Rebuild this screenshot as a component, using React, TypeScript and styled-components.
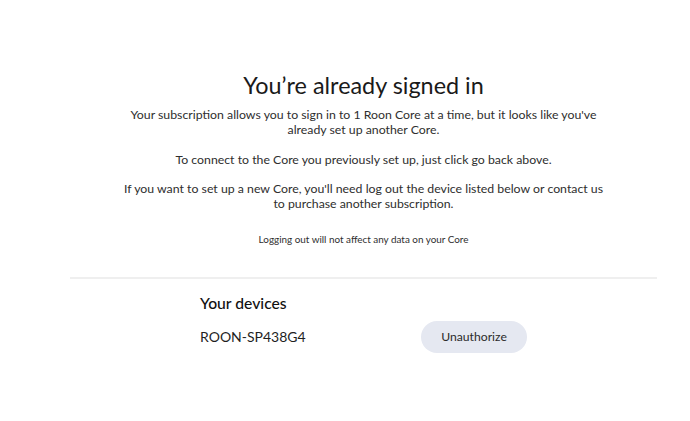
import * as React from 'react'
import styled, { createGlobalStyle } from 'styled-components'

const GlobalStyle = createGlobalStyle`
	html, body {
		margin: 0;
		padding: 0;
		background: #ffffff;
	}
	body {
		font-family: Lato, 'Noto Sans', sans-serif;
		color: #1f1f1f;
	}
`

const Page = styled.main`
	margin: 0 33px 0 70px;
	padding-top: 71px;
	display: flex;
	flex-direction: column;
	align-items: center;
`

const Title = styled.h1`
	margin: 0 0 8px;
	font-size: 23.4px;
	font-weight: 400;
	line-height: 28px;
	color: #1a1a1a;
`

const Text = styled.p<{ $small?: boolean }>`
	margin: ${(p) => (p.$small ? '6px 0 0' : '0 0 14.5px')};
	max-width: 486px;
	text-align: center;
	font-size: ${(p) => (p.$small ? '9.9px' : '12.3px')};
	line-height: 15px;
	color: #2e2e2e;
`

const Divider = styled.hr`
	align-self: stretch;
	margin: 30px 0 0;
	border: none;
	border-top: 2px solid #efefef;
`

const Devices = styled.section`
	width: 327px;
	padding-top: 14px;
`

const DevicesTitle = styled.h2`
	margin: 0 0 8px;
	font-size: 15.7px;
	font-weight: 500;
	line-height: 20px;
	color: #111111;
`

const DeviceRow = styled.div`
	display: flex;
	align-items: center;
	justify-content: space-between;
`

const DeviceName = styled.span`
	font-size: 14px;
	color: #1f1f1f;
`

const Button = styled.button`
	width: 106px;
	height: 32px;
	border: none;
	border-radius: 16px;
	background: #e5e8f1;
	font-family: Lato, 'Noto Sans', sans-serif;
	font-size: 12.2px;
	color: #2b2b2b;
	cursor: pointer;
`

export default function App() {
	return (
		<>
			<GlobalStyle />
			<Page>
				<Title>You’re already signed in</Title>
				<Text>
					Your subscription allows you to sign in to 1 Roon Core at a time, but
					it looks like you've already set up another Core.
				</Text>
				<Text>
					To connect to the Core you previously set up, just click go back
					above.
				</Text>
				<Text>
					If you want to set up a new Core, you'll need log out the device
					listed below or contact us to purchase another subscription.
				</Text>
				<Text $small>Logging out will not affect any data on your Core</Text>
				<Divider />
				<Devices>
					<DevicesTitle>Your devices</DevicesTitle>
					<DeviceRow>
						<DeviceName>ROON-SP438G4</DeviceName>
						<Button>Unauthorize</Button>
					</DeviceRow>
				</Devices>
			</Page>
		</>
	)
}
